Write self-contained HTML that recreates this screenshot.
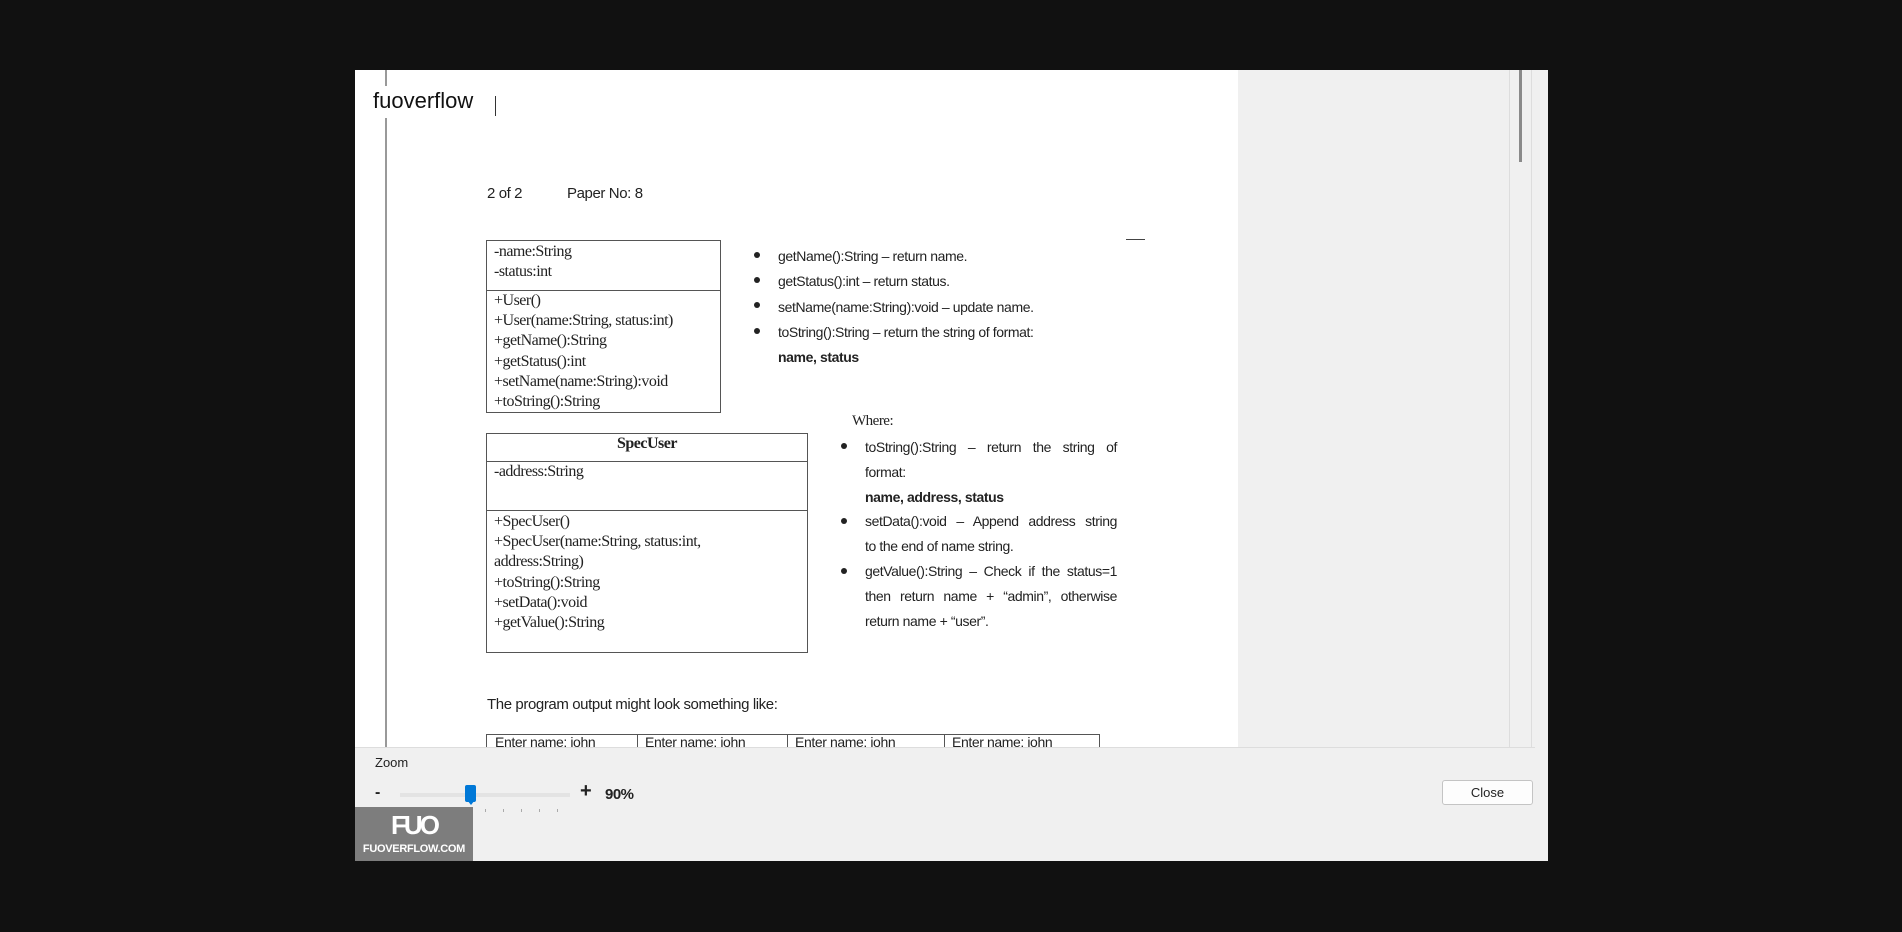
<!DOCTYPE html>
<html><head><meta charset="utf-8"><style>
*{margin:0;padding:0;box-sizing:border-box}
body{width:1902px;height:932px;background:#111111;position:relative;overflow:hidden;font-family:"Liberation Sans",sans-serif}
.a{position:absolute;white-space:nowrap}
.dlg{position:absolute;left:355px;top:70px;width:1193px;height:791px;background:#f0f0f0}
.page{position:absolute;left:355px;top:70px;width:883px;height:677px;background:#fff;overflow:hidden}
.t{font-family:"Liberation Serif",serif;font-size:16px;color:#222;letter-spacing:-0.5px}
.c{font-family:"Liberation Sans",sans-serif;font-size:14px;color:#222;letter-spacing:-0.4px}
.box{position:absolute;border:1px solid #555}
.bul{position:absolute;width:6px;height:6px;border-radius:50%;background:#222}
.j{display:block;text-align:justify;text-align-last:justify;width:252px}
.l{display:block}
</style></head><body>
<div class="dlg"></div>
<div class="page">
 <div style="position:absolute;left:30px;top:0;width:2px;height:677px;background:#999"></div>
</div>
<div class="a" style="left:1509px;top:70px;width:1px;height:677px;background:#ddd"></div>
<div class="a" style="left:1531px;top:70px;width:1px;height:677px;background:#ddd"></div>
<div class="a" style="left:1519px;top:70px;width:3px;height:92px;background:#8a8a8a"></div>
<div class="a" style="left:355px;top:747px;width:1180px;height:1px;background:#ddd"></div>

<div class="a" style="left:365px;top:86px;width:130px;height:32px;background:#fff"></div>
<div class="a" style="left:373px;top:88px;font-size:22px;color:#111">fuoverflow</div>
<div class="a" style="left:495px;top:96px;width:1px;height:20px;background:#333"></div>

<div class="a c" style="left:487px;top:185px;font-size:15px">2 of 2</div>
<div class="a c" style="left:567px;top:185px;font-size:15px">Paper No: 8</div>

<div class="box" style="left:486px;top:240px;width:235px;height:173px"></div>
<div class="a" style="left:486px;top:290px;width:235px;height:1px;background:#555"></div>
<div class="a t" style="left:494px;top:242px;line-height:20px">-name:String<br>-status:int</div>
<div class="a t" style="left:494px;top:291px;line-height:20.2px">+User()<br>+User(name:String, status:int)<br>+getName():String<br>+getStatus():int<br>+setName(name:String):void<br>+toString():String</div>

<div class="bul" style="left:754px;top:252px"></div>
<div class="bul" style="left:754px;top:277px"></div>
<div class="bul" style="left:754px;top:302px"></div>
<div class="bul" style="left:754px;top:328px"></div>
<div class="a c" style="left:778px;top:244px;line-height:25.3px">getName():String – return name.<br>getStatus():int – return status.<br>setName(name:String):void – update name.<br>toString():String – return the string of format:<br><b>name, status</b></div>
<div class="a" style="left:1126px;top:239px;width:19px;height:1px;background:#444"></div>

<div class="box" style="left:486px;top:433px;width:322px;height:220px"></div>
<div class="a" style="left:486px;top:461px;width:322px;height:1px;background:#555"></div>
<div class="a" style="left:486px;top:510px;width:322px;height:1px;background:#555"></div>
<div class="a t" style="left:486px;top:435px;width:322px;text-align:center;font-weight:bold">SpecUser</div>
<div class="a t" style="left:494px;top:463px">-address:String</div>
<div class="a t" style="left:494px;top:512px;line-height:20.2px">+SpecUser()<br>+SpecUser(name:String, status:int,<br>address:String)<br>+toString():String<br>+setData():void<br>+getValue():String</div>

<div class="a t" style="left:852px;top:413px;font-size:15px">Where:</div>
<div class="bul" style="left:841px;top:443px"></div>
<div class="bul" style="left:841px;top:518px"></div>
<div class="bul" style="left:841px;top:568px"></div>
<div class="a c" style="left:865px;top:435px;line-height:24.8px">
<span class="j">toString():String – return the string of</span>
<span class="l">format:</span>
<span class="l"><b>name, address, status</b></span>
<span class="j">setData():void – Append address string</span>
<span class="l">to the end of name string.</span>
<span class="j">getValue():String – Check if the status=1</span>
<span class="j">then return name + “admin”, otherwise</span>
<span class="l">return name + “user”.</span>
</div>

<div class="a c" style="left:487px;top:696px;font-size:15px">The program output might look something like:</div>
<div class="a" style="left:486px;top:734px;width:614px;height:13px;border:1px solid #555;border-bottom:none;overflow:hidden">
 <div class="a c" style="left:8px;top:-1px">Enter name: john</div>
 <div class="a" style="left:150px;top:0;width:1px;height:13px;background:#555"></div>
 <div class="a c" style="left:158px;top:-1px">Enter name: john</div>
 <div class="a" style="left:300px;top:0;width:1px;height:13px;background:#555"></div>
 <div class="a c" style="left:308px;top:-1px">Enter name: john</div>
 <div class="a" style="left:457px;top:0;width:1px;height:13px;background:#555"></div>
 <div class="a c" style="left:465px;top:-1px">Enter name: john</div>
</div>

<div class="a" style="left:375px;top:755px;font-size:13px;color:#222">Zoom</div>
<div class="a" style="left:375px;top:784px;font-size:16px;font-weight:bold;color:#222">-</div>
<div class="a" style="left:400px;top:793px;width:170px;height:4px;background:#e3e3e3"></div>
<div class="a" style="left:465px;top:785px;width:11px;height:17px;background:#0078d7;border-radius:2px"></div>
<div class="a" style="left:467px;top:800px;width:0;height:0;border-left:4px solid transparent;border-right:4px solid transparent;border-top:5px solid #0078d7"></div>
<div class="a" style="left:485px;top:809px;width:85px;height:3px;background:repeating-linear-gradient(90deg,#aaa 0 1px,transparent 1px 18px)"></div>
<div class="a" style="left:580px;top:780px;font-size:20px;font-weight:bold;color:#222">+</div>
<div class="a" style="left:605px;top:786px;font-size:15px;font-weight:bold;color:#222;letter-spacing:-0.5px">90%</div>

<div class="a" style="left:1442px;top:780px;width:91px;height:25px;background:#fdfdfd;border:1px solid #c4c4c4;border-radius:3px;font-size:13px;text-align:center;line-height:23px;color:#222">Close</div>

<div class="a" style="left:355px;top:807px;width:118px;height:54px;background:#7d7d7d"></div>
<div class="a" style="left:355px;top:810px;width:118px;text-align:center;font-size:26px;font-weight:bold;color:#fff;letter-spacing:-3px">FUO</div>
<div class="a" style="left:355px;top:843px;width:118px;text-align:center;font-size:11px;font-weight:bold;color:#fff;letter-spacing:-0.3px">FUOVERFLOW.COM</div>
</body></html>
